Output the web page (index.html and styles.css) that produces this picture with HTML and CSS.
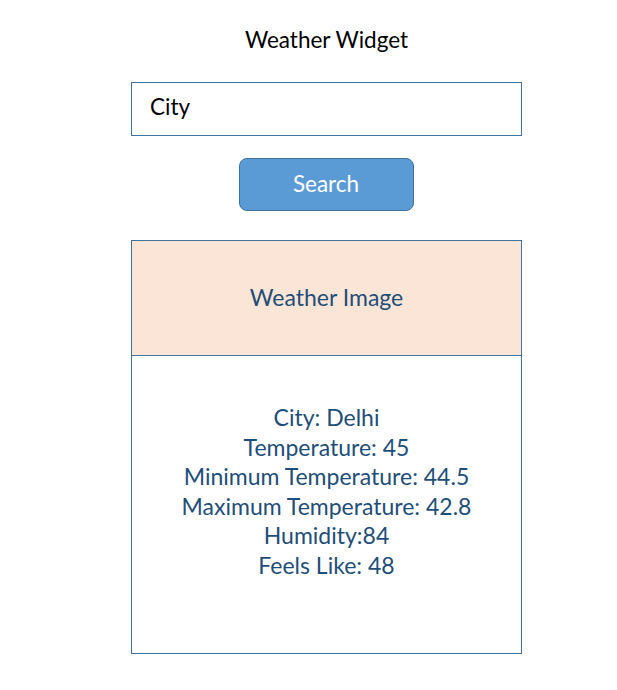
FILE: index.html
```html
<!DOCTYPE html>
<html>
<head>
<meta charset="utf-8">
<link rel="stylesheet" href="styles.css">
</head>
<body>
<div class="widget">
  <h1 class="title">Weather Widget</h1>
  <div class="input">City</div>
  <div class="btn-row"><button class="btn">Search</button></div>
  <div class="card">
    <div class="image">Weather Image</div>
    <div class="info">
      <div>City: Delhi</div>
      <div>Temperature: 45</div>
      <div>Minimum Temperature: 44.5</div>
      <div>Maximum Temperature: 42.8</div>
      <div>Humidity:84</div>
      <div>Feels Like: 48</div>
    </div>
  </div>
</div>
</body>
</html>
```
FILE: styles.css
```css
html, body {
  margin: 0;
  padding: 0;
  background: #ffffff;
}
body {
  font-family: Lato, "Open Sans", sans-serif;
}
.widget {
  width: 391px;
  margin-left: 131px;
  padding-top: 25px;
  display: flex;
  flex-direction: column;
}
.title {
  margin: 0;
  height: 30px;
  line-height: 30px;
  font-size: 22.5px;
  font-weight: 400;
  text-align: center;
  color: #000;
}
.input {
  margin-top: 27px;
  box-sizing: border-box;
  height: 54px;
  border: 1px solid #41719c;
  padding-left: 18px;
  padding-bottom: 5px;
  display: flex;
  align-items: center;
  font-size: 22.5px;
  color: #000;
}
.btn-row {
  margin-top: 22px;
  display: flex;
  justify-content: center;
}
.btn {
  box-sizing: border-box;
  width: 175px;
  height: 53px;
  margin-left: -1px;
  background: #5b9bd5;
  border: 1px solid #41719c;
  border-radius: 8px;
  color: #fff;
  font-family: Lato, "Open Sans", sans-serif;
  font-size: 22.5px;
  padding: 0 0 3px 0;
}
.card {
  margin-top: 29px;
  box-sizing: border-box;
  height: 414px;
  border: 1px solid #41719c;
  display: flex;
  flex-direction: column;
}
.image {
  height: 115px;
  background: #fbe5d6;
  border-bottom: 1px solid #41719c;
  display: flex;
  align-items: center;
  justify-content: center;
  font-size: 23px;
  padding-bottom: 3px;
  box-sizing: border-box;
  color: #1f4e79;
}
.info {
  padding-top: 47px;
  text-align: center;
  font-size: 23px;
  line-height: 29.5px;
  color: #1f4e79;
}
```
